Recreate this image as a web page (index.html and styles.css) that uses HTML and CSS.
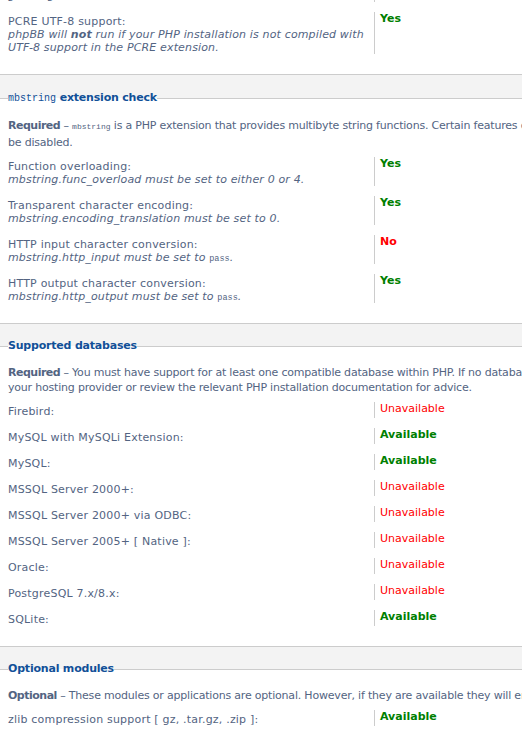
FILE: index.html
```html
<!DOCTYPE html>
<html lang="en">
<head>
<meta charset="utf-8">
<title>Requirements</title>
<link rel="stylesheet" href="styles.css">
</head>
<body>
<div class="panel">
  <fieldset class="group group--cut">
    <dl class="row">
      <dt class="label">PHP supports <code class="code">getimagesize()</code> function:<br><em class="explain"><strong>Required</strong> – In order for phpBB to function correctly, the<br>getimagesize function needs to be available.</em></dt>
      <dd class="value"><strong class="ok">Yes</strong></dd>
    </dl>
    <dl class="row">
      <dt class="label">PCRE UTF-8 support:<br><em class="explain">phpBB will <strong>not</strong> run if your PHP installation is not compiled with UTF-8 support in the PCRE extension.</em></dt>
      <dd class="value"><strong class="ok">Yes</strong></dd>
    </dl>
  </fieldset>

  <fieldset class="group group--code">
    <legend class="legend"><code class="legend-code">mbstring</code> extension check</legend>
    <p class="intro intro--tall"><strong class="intro-key">Required</strong> – <code class="code">mbstring</code> is a PHP extension that provides multibyte string functions. Certain features of <code class="code">mbstring</code> are not compatible with phpBB and must<br>be disabled.</p>
    <dl class="row">
      <dt class="label">Function overloading:<br><em class="explain">mbstring.func_overload must be set to either 0 or 4.</em></dt>
      <dd class="value"><strong class="ok">Yes</strong></dd>
    </dl>
    <dl class="row">
      <dt class="label">Transparent character encoding:<br><em class="explain">mbstring.encoding_translation must be set to 0.</em></dt>
      <dd class="value"><strong class="ok">Yes</strong></dd>
    </dl>
    <dl class="row">
      <dt class="label">HTTP input character conversion:<br><em class="explain">mbstring.http_input must be set to <code class="code code--explain">pass</code>.</em></dt>
      <dd class="value"><strong class="bad">No</strong></dd>
    </dl>
    <dl class="row">
      <dt class="label">HTTP output character conversion:<br><em class="explain">mbstring.http_output must be set to <code class="code code--explain">pass</code>.</em></dt>
      <dd class="value"><strong class="ok">Yes</strong></dd>
    </dl>
  </fieldset>

  <fieldset class="group">
    <legend class="legend">Supported databases</legend>
    <p class="intro"><strong class="intro-key">Required</strong> – You must have support for at least one compatible database within PHP. If no database modules are shown as available you should contact<br>your hosting provider or review the relevant PHP installation documentation for advice.</p>
    <dl class="row">
      <dt class="label">Firebird:</dt>
      <dd class="value"><span class="na">Unavailable</span></dd>
    </dl>
    <dl class="row">
      <dt class="label">MySQL with MySQLi Extension:</dt>
      <dd class="value"><strong class="ok">Available</strong></dd>
    </dl>
    <dl class="row">
      <dt class="label">MySQL:</dt>
      <dd class="value"><strong class="ok">Available</strong></dd>
    </dl>
    <dl class="row">
      <dt class="label">MSSQL Server 2000+:</dt>
      <dd class="value"><span class="na">Unavailable</span></dd>
    </dl>
    <dl class="row">
      <dt class="label">MSSQL Server 2000+ via ODBC:</dt>
      <dd class="value"><span class="na">Unavailable</span></dd>
    </dl>
    <dl class="row">
      <dt class="label">MSSQL Server 2005+ [ Native ]:</dt>
      <dd class="value"><span class="na">Unavailable</span></dd>
    </dl>
    <dl class="row">
      <dt class="label">Oracle:</dt>
      <dd class="value"><span class="na">Unavailable</span></dd>
    </dl>
    <dl class="row">
      <dt class="label">PostgreSQL 7.x/8.x:</dt>
      <dd class="value"><span class="na">Unavailable</span></dd>
    </dl>
    <dl class="row">
      <dt class="label">SQLite:</dt>
      <dd class="value"><strong class="ok">Available</strong></dd>
    </dl>
  </fieldset>

  <fieldset class="group">
    <legend class="legend">Optional modules</legend>
    <p class="intro"><strong class="intro-key">Optional</strong> – These modules or applications are optional. However, if they are available they will enable extra features.</p>
    <dl class="row">
      <dt class="label">zlib compression support [ gz, .tar.gz, .zip ]:</dt>
      <dd class="value"><strong class="ok">Available</strong></dd>
    </dl>
    <dl class="row">
      <dt class="label">bzip2 compression support [ .tar.bz2 ]:</dt>
      <dd class="value"><strong class="ok">Available</strong></dd>
    </dl>
  </fieldset>
</div>
</body>
</html>
```

FILE: styles.css
```css
html, body {
  margin: 0;
  padding: 0;
  overflow: hidden;
}

body {
  background: #f3f3f3;
  font-family: "DejaVu Sans", Verdana, sans-serif;
  font-size: 11px;
  color: #536482;
}

.panel {
  width: 940px;
}

.group {
  margin: 15px 0 0;
  padding: 12px 10px 10px 8px;
  border: 1px solid #cccccc;
  border-left: 0;
  border-right: 0;
  background: #ffffff;
  min-width: 0;
}

.group--code {
  margin-top: 16px;
}

.group--cut {
  margin-top: -40px;
  padding-top: 0;
  border-top: 0;
}

.legend {
  padding: 0;
  font-size: 11px;
  font-weight: bold;
  line-height: 14px;
  letter-spacing: -0.2px;
  color: #115098;
}

.legend-code {
  font-family: "Liberation Mono", monospace;
  font-size: 10px;
  font-weight: normal;
  line-height: 1;
  letter-spacing: 0;
}

.intro {
  margin: 0 0 7px;
  line-height: 15px;
  letter-spacing: -0.2px;
  white-space: nowrap;
}

.intro--tall {
  margin-bottom: 6px;
  line-height: 17px;
}

.intro-key {
  letter-spacing: -0.5px;
}

.code {
  font-family: "Liberation Mono", monospace;
  font-size: 8px;
  line-height: 1;
  letter-spacing: 0;
}

.code--explain {
  font-size: 8.5px;
  font-style: normal;
}

.row {
  display: flex;
  margin: 0 0 10px;
}

.label {
  flex: none;
  width: 366px;
  margin: 0;
  padding-top: 3px;
  line-height: 13px;
  letter-spacing: 0.2px;
}

.explain {
  font-style: italic;
  letter-spacing: 0.15px;
}

.value {
  margin: 0;
  padding: 0 0 3px 5px;
  border-left: 1px solid #cccccc;
  line-height: 13px;
}

.ok {
  color: #007f00;
}

.bad {
  color: #ff0000;
}

.na {
  color: #ff0000;
}
```
